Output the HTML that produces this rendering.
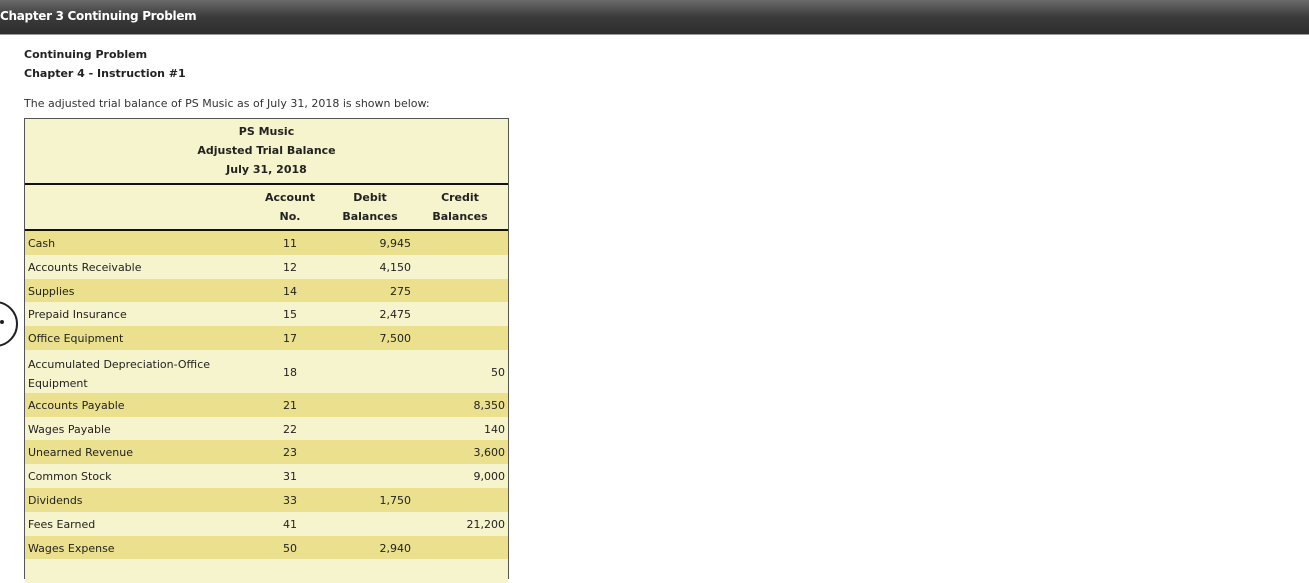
<!DOCTYPE html>
<html><head><meta charset="utf-8"><style>
body{margin:0;width:1309px;height:566px;overflow:hidden;background:#fff;font-family:"DejaVu Sans","Liberation Sans",sans-serif;position:relative}
.bar{position:absolute;left:0;top:0;width:1309px;height:34px;background:linear-gradient(#6a6a6a,#3a3a3a 50%,#2e2e2e);border-bottom:1px solid #999}
.bar span{position:absolute;left:0;top:9px;color:#fff;font-weight:bold;font-size:12px;font-family:"DejaVu Sans",sans-serif;letter-spacing:-0.3px}
.t{position:absolute;font-size:11px;color:#333;white-space:nowrap}
.b{font-weight:bold;color:#222}
.tab{position:absolute;left:24px;top:118px;width:483px;height:460px;border:1px solid #555;border-bottom:none;background:#f6f4cc}
.r{position:absolute;left:0;width:483px;font-size:11px;color:#222}
.r div{position:absolute;top:50%;transform:translateY(-45%)}
.d{background:#ebe08d}
.l{background:#f6f4cc}
</style></head><body>
<div class="bar"><span>Chapter 3 Continuing Problem</span></div>
<div class="t b" style="left:24px;top:48px">Continuing Problem</div>
<div class="t b" style="left:24px;top:67px">Chapter 4 - Instruction #1</div>
<div class="t" style="left:24px;top:97px">The adjusted trial balance of PS Music as of July 31, 2018 is shown below:</div>
<div class="tab">
<div class="t b" style="left:0;width:483px;text-align:center;top:6px">PS Music</div>
<div class="t b" style="left:0;width:483px;text-align:center;top:25px">Adjusted Trial Balance</div>
<div class="t b" style="left:0;width:483px;text-align:center;top:44px">July 31, 2018</div>
<div style="position:absolute;left:0;top:64px;width:483px;height:2px;background:#111"></div>
<div class="t b" style="left:230px;width:70px;text-align:center;top:72px">Account</div>
<div class="t b" style="left:230px;width:70px;text-align:center;top:91px">No.</div>
<div class="t b" style="left:310px;width:70px;text-align:center;top:72px">Debit</div>
<div class="t b" style="left:310px;width:70px;text-align:center;top:91px">Balances</div>
<div class="t b" style="left:400px;width:70px;text-align:center;top:72px">Credit</div>
<div class="t b" style="left:400px;width:70px;text-align:center;top:91px">Balances</div>
<div style="position:absolute;left:0;top:110px;width:483px;height:2px;background:#111"></div>
</div>
<div style="position:absolute;left:25px;top:231px;width:483px">
<div class="r d" style="top:0;height:24px"><div style="left:3px">Cash</div><div style="left:230px;width:70px;text-align:center">11</div><div style="right:97px">9,945</div></div>
<div class="r l" style="top:24px;height:24px"><div style="left:3px">Accounts Receivable</div><div style="left:230px;width:70px;text-align:center">12</div><div style="right:97px">4,150</div></div>
<div class="r d" style="top:48px;height:23px"><div style="left:3px">Supplies</div><div style="left:230px;width:70px;text-align:center">14</div><div style="right:97px">275</div></div>
<div class="r l" style="top:71px;height:24px"><div style="left:3px">Prepaid Insurance</div><div style="left:230px;width:70px;text-align:center">15</div><div style="right:97px">2,475</div></div>
<div class="r d" style="top:95px;height:24px"><div style="left:3px">Office Equipment</div><div style="left:230px;width:70px;text-align:center">17</div><div style="right:97px">7,500</div></div>
<div class="r l" style="top:119px;height:43px"><div style="left:3px;line-height:19px">Accumulated Depreciation-Office<br>Equipment</div><div style="left:230px;width:70px;text-align:center">18</div><div style="right:3px">50</div></div>
<div class="r d" style="top:162px;height:24px"><div style="left:3px">Accounts Payable</div><div style="left:230px;width:70px;text-align:center">21</div><div style="right:3px">8,350</div></div>
<div class="r l" style="top:186px;height:23px"><div style="left:3px">Wages Payable</div><div style="left:230px;width:70px;text-align:center">22</div><div style="right:3px">140</div></div>
<div class="r d" style="top:209px;height:24px"><div style="left:3px">Unearned Revenue</div><div style="left:230px;width:70px;text-align:center">23</div><div style="right:3px">3,600</div></div>
<div class="r l" style="top:233px;height:24px"><div style="left:3px">Common Stock</div><div style="left:230px;width:70px;text-align:center">31</div><div style="right:3px">9,000</div></div>
<div class="r d" style="top:257px;height:24px"><div style="left:3px">Dividends</div><div style="left:230px;width:70px;text-align:center">33</div><div style="right:97px">1,750</div></div>
<div class="r l" style="top:281px;height:24px"><div style="left:3px">Fees Earned</div><div style="left:230px;width:70px;text-align:center">41</div><div style="right:3px">21,200</div></div>
<div class="r d" style="top:305px;height:23px"><div style="left:3px">Wages Expense</div><div style="left:230px;width:70px;text-align:center">50</div><div style="right:97px">2,940</div></div>
<div class="r l" style="top:328px;height:24px"></div>
</div>
<div style="position:absolute;left:-28px;top:301px;width:42px;height:42px;border:2px solid #222;border-radius:50%"></div>
<div style="position:absolute;left:0;top:320px;width:4px;height:4px;background:#222;border-radius:50%"></div>
</body></html>
